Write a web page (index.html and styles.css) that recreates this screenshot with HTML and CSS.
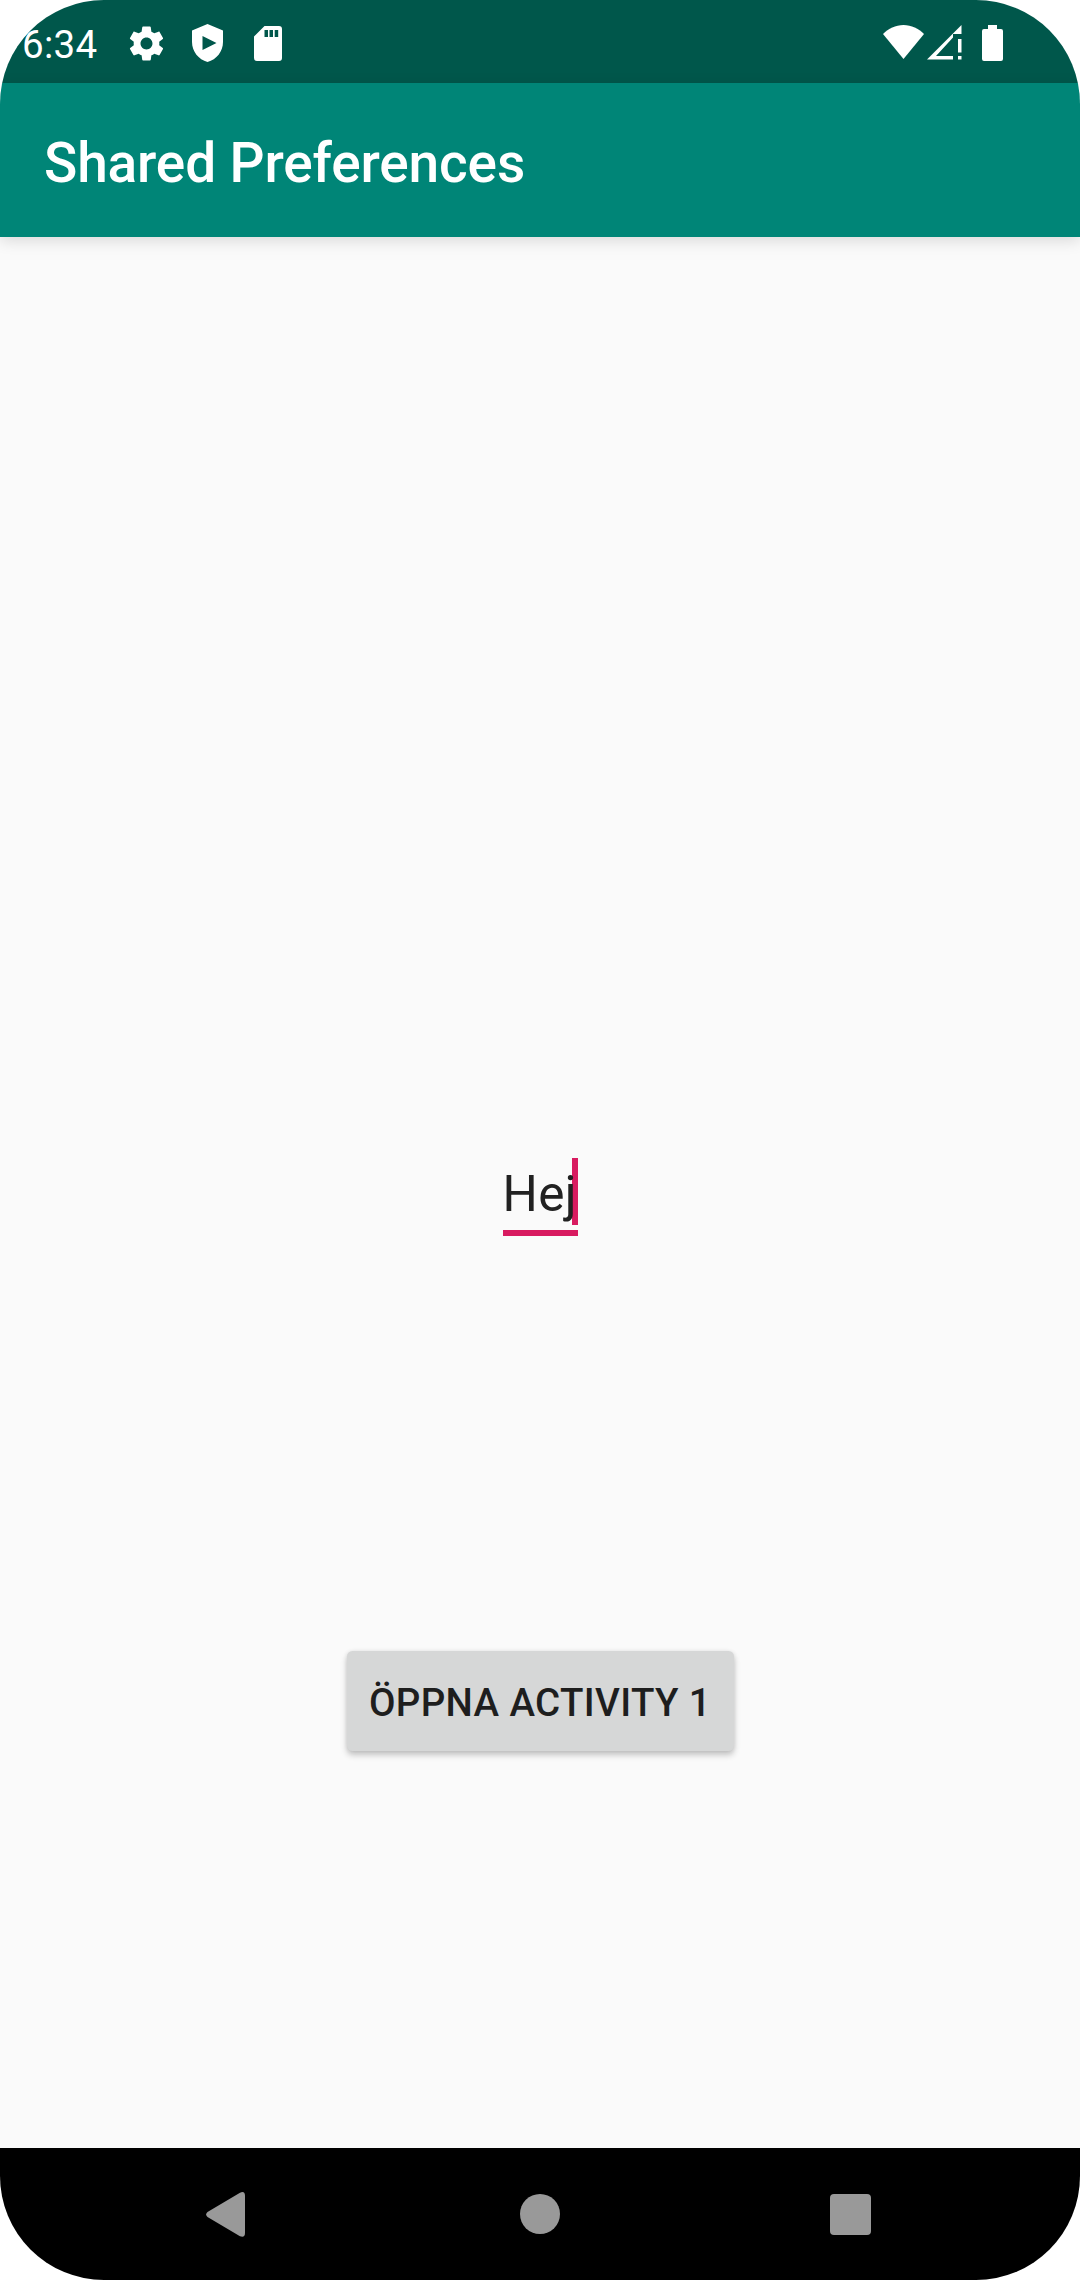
FILE: index.html
```html
<!DOCTYPE html>
<html lang="sv">
<head>
<meta charset="utf-8">
<title>Shared Preferences</title>
<link rel="stylesheet" href="styles.css">
</head>
<body>
<div class="screen">
  <div class="status-bar">
    <span class="clock">6:34</span>
    <svg class="icon-settings" viewBox="0 0 24 24"><path d="M19.43 12.98c.04-.32.07-.64.07-.98s-.03-.66-.07-.98l2.11-1.65c.19-.15.24-.42.12-.64l-2-3.46c-.12-.22-.39-.3-.61-.22l-2.49 1c-.52-.4-1.08-.73-1.69-.98l-.38-2.65C14.46 2.18 14.25 2 14 2h-4c-.25 0-.46.18-.49.42l-.38 2.65c-.61.25-1.17.59-1.69.98l-2.49-1c-.23-.09-.49 0-.61.22l-2 3.46c-.13.22-.07.49.12.64l2.11 1.65c-.04.32-.07.65-.07.98s.03.66.07.98l-2.11 1.65c-.19.15-.24.42-.12.64l2 3.46c.12.22.39.3.61.22l2.49-1c.52.4 1.08.73 1.69.98l.38 2.65c.03.24.24.42.49.42h4c.25 0 .46-.18.49-.42l.38-2.65c.61-.25 1.17-.59 1.69-.98l2.49 1c.23.09.49 0 .61-.22l2-3.46c.12-.22.07-.49-.12-.64l-2.11-1.65zM12 15.5c-1.93 0-3.5-1.57-3.5-3.5s1.57-3.5 3.500-3.500 3.500 1.570 3.500 3.500-1.570 3.500-3.500 3.500z"/></svg>
    <svg class="icon-shield" viewBox="0 0 31 38"><path fill-rule="evenodd" d="M15.500 0L31 6.500V18C31 27.500 24.500 35.500 15.500 38C6.500 35.500 0 27.500 0 18V6.500ZM10.500 12V26L24.500 19Z"/></svg>
    <svg class="icon-sd" viewBox="0 0 28 35"><path fill-rule="evenodd" d="M10.500 0H25Q28 0 28 3V32Q28 35 25 35H3Q0 35 0 32V10.500ZM10.500 4V11H14V4ZM15.500 4V11H19V4ZM20.700 4V11H24.200V4Z"/></svg>
    <span class="spacer"></span>
    <svg class="icon-wifi" viewBox="0 0 41 34"><path d="M20.500 34L0 9C5.500 3.500 12.500 0 20.500 0S35.500 3.500 41 9Z"/></svg>
    <svg class="icon-signal" viewBox="0 0 35 35"><path fill-rule="evenodd" d="M34.500 0V9H26V12.500L9 31H26V34.500H0ZM31 14H34.500V27.500H31ZM31 31H34.500V34.500H31Z"/></svg>
    <svg class="icon-battery" viewBox="0 0 21 36"><path d="M6 0H15V4H19Q21 4 21 6V34Q21 36 19 36H2Q0 36 0 34V6Q0 4 2 4H6Z"/></svg>
  </div>
  <header class="app-bar"><h1 class="title">Shared Preferences</h1></header>
  <main class="content">
    <div class="field"><span class="value">Hej</span></div>
    <button class="open-button">ÖPPNA ACTIVITY 1</button>
  </main>
  <nav class="nav-bar">
    <svg class="nav-back" viewBox="0 0 39 45"><path d="M34 .7Q39-1.500 39 4V41Q39 46 34 44.300L1.500 25Q-1.200 22.500 1.500 20Z"/></svg>
    <svg class="nav-home" viewBox="0 0 40 40"><circle cx="20" cy="20" r="20"/></svg>
    <svg class="nav-recents" viewBox="0 0 41 41"><rect width="41" height="41" rx="4"/></svg>
  </nav>
</div>
</body>
</html>
```
FILE: styles.css
```css
* {
  box-sizing: border-box;
}

body {
  margin: 0;
  background: #fff;
  font-family: Roboto, sans-serif;
}

.screen {
  display: flex;
  flex-direction: column;
  width: 1080px;
  height: 2280px;
  overflow: hidden;
  border-radius: 104px;
  background: #fafafa;
}

svg {
  display: block;
  flex: none;
}

.status-bar {
  display: flex;
  align-items: flex-start;
  height: 83px;
  padding: 0 77px 0 22px;
  background: #00574b;
  fill: #fff;
}

.clock {
  width: 104px;
  padding-top: 22px;
  color: #fff;
  font-size: 38.5px;
  letter-spacing: .3px;
  line-height: 46px;
}

.icon-settings {
  width: 41px;
  height: 41px;
  margin-top: 23px;
}

.icon-shield {
  width: 31px;
  height: 38px;
  margin: 24px 0 0 25px;
}

.icon-sd {
  width: 28px;
  height: 35px;
  margin: 26px 0 0 31px;
}

.spacer {
  flex: 1;
}

.icon-wifi {
  width: 41px;
  height: 34px;
  margin-top: 25px;
}

.icon-signal {
  width: 35px;
  height: 35px;
  margin: 25px 0 0 3px;
}

.icon-battery {
  width: 21px;
  height: 36px;
  margin: 25px 0 0 20px;
}

.app-bar {
  display: flex;
  align-items: center;
  height: 154px;
  padding: 5px 44px 0;
  background: #008577;
  box-shadow: 0 4px 14px rgba(0, 0, 0, .13);
}

.title {
  margin: 0;
  color: #fff;
  font-size: 55px;
  font-weight: 500;
  letter-spacing: -.15px;
  line-height: 64px;
}

.content {
  display: flex;
  flex: 1;
  flex-direction: column;
  align-items: center;
  padding-top: 921px;
}

.field {
  width: 75px;
  height: 78px;
  border-bottom: 6px solid #d81b60;
  background: linear-gradient(#d81b60, #d81b60) 100% 0 / 6px 67px no-repeat;
}

.value {
  display: block;
  color: #212121;
  font-size: 49.5px;
  letter-spacing: .4px;
  line-height: 72px;
}

.open-button {
  width: 387px;
  height: 100px;
  margin-top: 415px;
  padding: 4px 0 0;
  border: 0;
  border-radius: 5.5px;
  background: #d6d7d7;
  box-shadow: 0 4px 6px rgba(0, 0, 0, .22), 0 0 4px rgba(0, 0, 0, .08);
  color: #1e1e1e;
  font: 500 38.5px/46px Roboto, sans-serif;
  letter-spacing: .35px;
  white-space: nowrap;
}

.nav-bar {
  display: flex;
  align-items: flex-start;
  height: 132px;
  padding-left: 206px;
  background: #000;
  fill: #999;
}

.nav-back {
  width: 39px;
  height: 45px;
  margin-top: 44px;
}

.nav-home {
  width: 40px;
  height: 40px;
  margin: 46px 0 0 275px;
}

.nav-recents {
  width: 41px;
  height: 41px;
  margin: 46px 0 0 270px;
}
```
